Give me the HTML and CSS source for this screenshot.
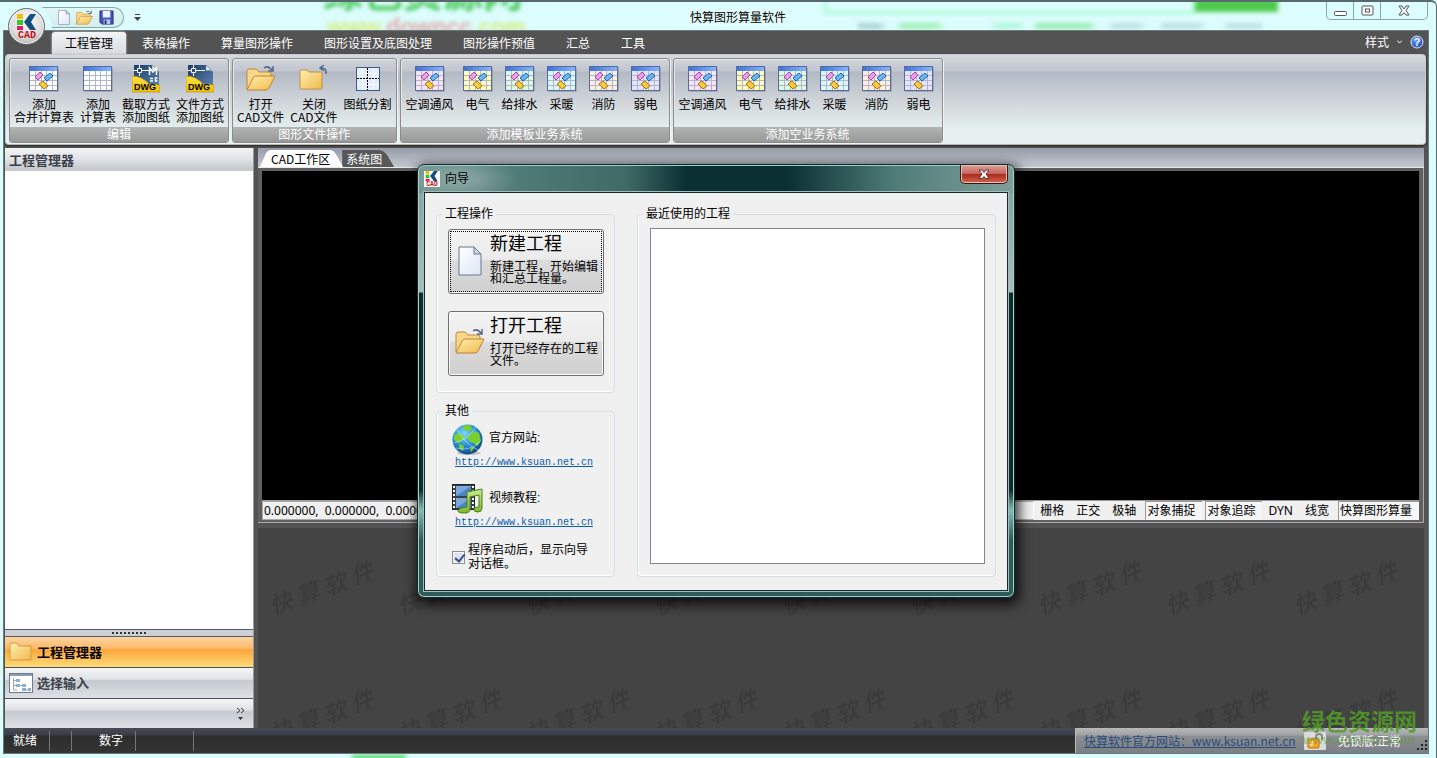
FILE: index.html
```html
<!DOCTYPE html>
<html lang="zh-CN">
<head>
    <meta charset="UTF-8">
    <meta name="viewport" content="width=device-width, initial-scale=1.0">
    <title>快算图形算量软件</title>
    <link rel="stylesheet" href="styles.css">
</head>
<body>
    <!-- shared icons -->
    <svg class="sprite" aria-hidden="true">
        <defs>
            <linearGradient id="g-blue" x1="0" y1="0" x2="1" y2="0"><stop offset="0" stop-color="#3f74d8"/><stop offset="1" stop-color="#86b4fa"/></linearGradient>
            <linearGradient id="g-folder" x1="0" y1="0" x2="1" y2="1"><stop offset="0" stop-color="#ffeeb0"/><stop offset="1" stop-color="#f0ba4c"/></linearGradient>
            <linearGradient id="g-gold" x1="0" y1="0" x2="0" y2="1"><stop offset="0" stop-color="#fbe04c"/><stop offset="1" stop-color="#f0c000"/></linearGradient>
            <linearGradient id="g-page" x1="0" y1="0" x2="1" y2="1"><stop offset="0" stop-color="#ffffff"/><stop offset="1" stop-color="#dce6f6"/></linearGradient>
            <linearGradient id="g-dwg" x1="0" y1="0" x2="1" y2="1"><stop offset="0" stop-color="#1d3c66"/><stop offset="1" stop-color="#5e86b4"/></linearGradient>
            <radialGradient id="g-globe" cx=".4" cy=".3" r=".75"><stop offset="0" stop-color="#7cd8f8"/><stop offset=".6" stop-color="#2188cc"/><stop offset="1" stop-color="#0a3f78"/></radialGradient>
            <radialGradient id="g-help" cx=".4" cy=".3" r=".8"><stop offset="0" stop-color="#6aa2ff"/><stop offset="1" stop-color="#1440b8"/></radialGradient>
            <linearGradient id="g-note" x1="0" y1="0" x2="0" y2="1"><stop offset="0" stop-color="#c8ee88"/><stop offset="1" stop-color="#7ab82c"/></linearGradient>
        </defs>
        <symbol id="i-table" viewBox="0 0 30 26">
            <rect x="1.5" y="1.5" width="28" height="24" fill="#5b6270" opacity=".6"/>
            <rect x=".5" y=".5" width="28" height="24" fill="currentColor" stroke="#5a6b9a"/>
            <rect x="1" y="1" width="27" height="4" fill="url(#g-blue)"/>
            <path d="M1 9.5h27M1 14.5h27M1 19.5h27M6.5 5v19M12.5 5v19M17.5 5v19M23.5 5v19" stroke="#b0b7cc" fill="none"/>
        </symbol>
        <symbol id="i-merge" viewBox="0 0 30 26">
            <use href="#i-table"/>
            <path d="M6 11l5-5 3 3-5 5z" fill="#f49aec" stroke="#a04ba8"/>
            <path d="M15 12l6-5 3 3-6 5z" fill="#68b8f8" stroke="#2060b0"/>
            <path d="M10 18l4-3 5 5-4 3z" fill="#fcca40" stroke="#a87408"/>
        </symbol>
        <symbol id="i-dwg" viewBox="0 0 28 28">
            <path d="M2 0h18l7 7v17H2z" fill="url(#g-dwg)"/>
            <path d="M20 0l7 7q-4-3-7-1z" fill="#eef4fa" stroke="#54719a" stroke-width=".5"/>
            <path d="M0 11q10 0 17 8l11 1v7H0z" fill="url(#g-gold)" stroke="#b88c00" stroke-width=".6"/>
            <path d="M2 5.500h3M10 5.500h9M7.500 0v3M7.500 8v3M5.500 3.500h4v4h-4z" fill="none" stroke="#fff"/>
            <text x="2" y="25" class="dwg-text">DWG</text>
        </symbol>
        <symbol id="i-folder-open" viewBox="0 0 30 28">
            <path d="M1 24V6q0-2 2-2h7l3 3h10q2 0 2 2v3" fill="#f8d888" stroke="#c08838"/>
            <path d="M1 25L7 13q1-2 3-2h19l-6 12q-1 2-3 2z" fill="url(#g-folder)" stroke="#c08030"/>
            <path d="M18 3q4-3 8 2M27 1v5h-5" fill="none" stroke="#56688a" stroke-width="1.500"/>
        </symbol>
        <symbol id="i-folder" viewBox="0 0 30 28">
            <path d="M1 8V6q0-1 1-1h6l2 2h12q1 0 1 1v15q0 1-1 1H2q-1 0-1-1z" fill="url(#g-folder)" stroke="#c89040"/>
            <path d="M27 9q1-6-5-6M25 0l-4 3 4 3" fill="none" stroke="#56688a" stroke-width="1.500"/>
        </symbol>
        <symbol id="i-split" viewBox="0 0 24 24">
            <rect x=".5" y=".5" width="23" height="23" fill="#e4eefa" stroke="#3a5a88"/>
            <path d="M6.500 1v22M17.500 1v22M1 6.500h22M1 17.500h22" stroke="#fff"/>
            <path d="M11.500 1v22M1 11.500h22" stroke="#000" stroke-dasharray="2 1"/>
        </symbol>
        <symbol id="i-page" viewBox="0 0 24 30">
            <path d="M1 1h15l7 7v21H1z" fill="url(#g-page)" stroke="#66788e"/>
            <path d="M16 1v7h7z" fill="#cfdcee" stroke="#66788e"/>
        </symbol>
        <symbol id="i-save" viewBox="0 0 16 16">
            <path d="M1 1h14v14H3l-2-2z" fill="#4256b8" stroke="#242e78"/>
            <path d="M4 1h8v7H4z" fill="#eef2ff"/>
            <path d="M5 10h7v5H5z" fill="#b8c4ec"/><path d="M6 11h2v4H6z" fill="#242e78"/>
        </symbol>
        <symbol id="i-logo" viewBox="0 0 20 25">
            <path d="M0 0h6v5H0z" fill="#eec010"/><path d="M0 6h6v5H0z" fill="#30c82c"/><path d="M0 12h6v4H0z" fill="#e01c68"/>
            <path d="M13 0h6l-5 8 5 8h-6L7 8z" fill="#12507e"/>
            <text x="1" y="24" class="logo-text">CAD</text>
        </symbol>
    </svg>

    <div class="backdrop" aria-hidden="true">
        <b class="ghost-name">绿色资源网</b>
        <b class="ghost-url"><i>www.</i>downcc<i>.com</i></b>
        <span class="ghost-box"></span>
        <span class="ghost-block"></span>
        <span class="ghost-line"></span>
        <span class="ghost-foot"></span>
    </div>

    <header class="titlebar">
        <button class="app-button" aria-label="菜单"><svg width="20" height="25"><use href="#i-logo"/></svg></button>
        <div class="quick">
            <div class="quick-bar">
                <button aria-label="新建"><svg width="12" height="15"><use href="#i-page"/></svg></button>
                <button aria-label="打开"><svg width="17" height="16"><use href="#i-folder-open"/></svg></button>
                <button aria-label="保存"><svg width="15" height="15"><use href="#i-save"/></svg></button>
            </div>
            <button class="quick-more" aria-label="自定义"><svg width="7" height="7"><path d="M1 .5h5" stroke="#444"/><path d="M0 3h7L3.500 7z" fill="#444"/></svg></button>
        </div>
        <h1 class="title">快算图形算量软件</h1>
        <div class="controls">
            <button aria-label="最小化"><svg width="13" height="12"><rect x=".5" y="6.500" width="12" height="4" rx="1" fill="#fff" stroke="#53545e"/></svg></button>
            <button aria-label="还原"><svg width="13" height="12"><rect x="1" y="1" width="11" height="9" rx="1" fill="#fff" stroke="#53545e"/><rect x="4.500" y="4" width="4" height="3" fill="#fff" stroke="#53545e"/></svg></button>
            <button class="close" aria-label="关闭"><svg width="12" height="12"><path d="M1 1h3l2 3 2-3h3L8 5.500l3 4.500H8L6 7.500 4 10H1l3-4.500z" fill="#fff" stroke="#53545e"/></svg></button>
        </div>
    </header>

    <div class="shell">
        <nav class="tabs">
            <button class="tab active">工程管理</button>
            <button class="tab">表格操作</button>
            <button class="tab">算量图形操作</button>
            <button class="tab">图形设置及底图处理</button>
            <button class="tab">图形操作预值</button>
            <button class="tab">汇总</button>
            <button class="tab">工具</button>
            <div class="tab-tools">
                <button class="style-menu">样式 <svg width="5" height="4"><path d="M0 .5l2.500 2.500L5 .5" fill="none" stroke="#fff"/></svg></button>
                <button aria-label="帮助"><svg width="14" height="14"><circle cx="7" cy="7" r="6" fill="url(#g-help)" stroke="#dbe6fb"/><text x="7" y="11" text-anchor="middle" class="help-text">?</text></svg></button>
            </div>
        </nav>

        <div class="ribbon">
            <section class="group">
                <div class="group-body">
                    <button class="tool"><svg width="30" height="26"><use href="#i-merge"/></svg>添加<br>合并计算表</button>
                    <button class="tool"><svg width="30" height="26"><use href="#i-table"/></svg>添加<br>计算表</button>
                    <button class="tool"><svg width="28" height="28"><use href="#i-dwg"/><path d="M17.500 10V3l3.500 4 3.500-4v7M18 13.500h3M18 16h3M25.500 13h-2v3h2" fill="none" stroke="#fff" stroke-width="1.500"/></svg>截取方式<br>添加图纸</button>
                    <button class="tool"><svg width="28" height="28"><use href="#i-dwg"/></svg>文件方式<br>添加图纸</button>
                </div>
                <h2>编辑</h2>
            </section>
            <section class="group">
                <div class="group-body">
                    <button class="tool"><svg width="30" height="28"><use href="#i-folder-open"/></svg>打开<br>CAD文件</button>
                    <button class="tool"><svg width="30" height="28"><use href="#i-folder"/></svg>关闭<br>CAD文件</button>
                    <button class="tool"><svg width="24" height="24"><use href="#i-split"/></svg>图纸分割</button>
                </div>
                <h2>图形文件操作</h2>
            </section>
            <section class="group wide">
                <div class="group-body">
                    <button class="tool air"><svg width="30" height="26"><use href="#i-merge"/></svg>空调通风</button>
                    <button class="tool power"><svg width="30" height="26"><use href="#i-merge"/></svg>电气</button>
                    <button class="tool water"><svg width="30" height="26"><use href="#i-merge"/></svg>给排水</button>
                    <button class="tool heat"><svg width="30" height="26"><use href="#i-merge"/></svg>采暖</button>
                    <button class="tool fire"><svg width="30" height="26"><use href="#i-merge"/></svg>消防</button>
                    <button class="tool weak"><svg width="30" height="26"><use href="#i-merge"/></svg>弱电</button>
                </div>
                <h2>添加模板业务系统</h2>
            </section>
            <section class="group wide">
                <div class="group-body">
                    <button class="tool air"><svg width="30" height="26"><use href="#i-merge"/></svg>空调通风</button>
                    <button class="tool power"><svg width="30" height="26"><use href="#i-merge"/></svg>电气</button>
                    <button class="tool water"><svg width="30" height="26"><use href="#i-merge"/></svg>给排水</button>
                    <button class="tool heat"><svg width="30" height="26"><use href="#i-merge"/></svg>采暖</button>
                    <button class="tool fire"><svg width="30" height="26"><use href="#i-merge"/></svg>消防</button>
                    <button class="tool weak"><svg width="30" height="26"><use href="#i-merge"/></svg>弱电</button>
                </div>
                <h2>添加空业务系统</h2>
            </section>
        </div>

        <main class="main">
            <aside class="sidebar">
                <h2 class="side-title">工程管理器</h2>
                <div class="side-tree"></div>
                <div class="splitter"><span></span></div>
                <button class="side-item selected"><svg width="24" height="22"><path d="M1 4q0-2 2-2h5l2 3h12v14H1z" fill="url(#g-folder)" stroke="#d09848"/></svg>工程管理器</button>
                <button class="side-item"><svg width="24" height="20"><rect x=".5" y=".5" width="23" height="19" fill="#fff" stroke="#6d7b90"/><path d="M1 1h22v2H1z" fill="#8d9bb2"/><path d="M4.500 5v12h4M4.500 7.500h4M4.500 12.500h4M11 12.500h3M16 17h3" stroke="#9aa8bc" fill="none"/><path d="M7 6h4v3H7zM7 11h4v3H7zM13 11h4v3h-4zM13 15h4v3h-4zM19 15h3v3h-3z" fill="#8fb0d4"/></svg>选择输入</button>
                <div class="side-foot"><button aria-label="更多"><svg width="9" height="14"><path d="M1 1l3 2.500L1 6M5 1l3 2.500L5 6" fill="none" stroke="#333"/><path d="M2 10h5l-2.500 3z" fill="#333"/></svg></button></div>
            </aside>

            <div class="work">
                <div class="doc-tabs">
                    <button class="doc-tab current">CAD工作区</button>
                    <button class="doc-tab">系统图</button>
                </div>
                <div class="cad">
                    <div class="canvas"></div>
                    <div class="cad-status">
                        <span class="coords">0.000000,&nbsp; 0.000000,&nbsp; 0.000000</span>
                        <button>栅格</button>
                        <button>正交</button>
                        <button>极轴</button>
                        <button class="pressed">对象捕捉</button>
                        <button class="pressed">对象追踪</button>
                        <button>DYN</button>
                        <button>线宽</button>
                        <button class="pressed">快算图形算量</button>
                    </div>
                </div>
                <div class="lower">
                    <svg width="100%" height="100%" aria-hidden="true">
                        <defs>
                            <pattern id="mark" width="128" height="128" patternUnits="userSpaceOnUse">
                                <text class="mark-text" x="15 42 69 96" y="87 77 68 57" rotate="-20">快算软件</text>
                            </pattern>
                        </defs>
                        <rect width="100%" height="100%" fill="url(#mark)"/>
                    </svg>
                </div>
            </div>
        </main>

        <footer class="status">
            <span class="cell ready">就绪</span>
            <span class="cell blank"></span>
            <span class="cell number">数字</span>
            <span class="cell spare"></span>
            <div class="status-right">
                <a href="#">快算软件官方网站：www.ksuan.net.cn</a>
                <svg width="22" height="18"><rect width="22" height="18" rx="1" fill="#d9dcdc"/><path d="M12 8V5q0-3 3-3t3 3v3" fill="none" stroke="#888" stroke-width="2"/><rect x="4" y="7" width="11" height="9" rx="1" fill="#f6a52c" stroke="#c07010"/><path d="M6 9h3v5H6z" fill="#ffd890"/></svg>
                <span class="licence">免锁版:正常</span>
                <svg class="grip" width="11" height="11"><path d="M8 1h2M4 5h2M8 5h2M0 9h2M4 9h2M8 9h2" stroke="#222" stroke-width="2"/></svg>
            </div>
        </footer>
    </div>

    <div class="site-mark"><b>绿色资源网</b><span>www.downcc.com</span></div>

    <section class="dialog" role="dialog" aria-labelledby="dialog-title">
        <header class="dialog-head">
            <svg width="16" height="16"><rect width="16" height="16" fill="#fff"/><use href="#i-logo" width="16" height="16"/></svg>
            <h2 id="dialog-title">向导</h2>
            <button class="dialog-close" aria-label="关闭"><svg width="12" height="11"><path d="M1 1h3l2 2.500L8 1h3L8 5l3 4.500H8L6 7.500 4 9.500H1L4 5z" fill="#fff" stroke="#5c3a3c"/></svg></button>
        </header>
        <div class="dialog-body">
            <div class="dialog-left">
                <fieldset class="box actions">
                    <legend>工程操作</legend>
                    <button class="action focused">
                        <svg width="24" height="30"><use href="#i-page"/></svg>
                        <span><strong>新建工程</strong>新建工程，开始编辑<br>和汇总工程量。</span>
                    </button>
                    <button class="action">
                        <svg width="30" height="28"><use href="#i-folder-open"/></svg>
                        <span><strong>打开工程</strong>打开已经存在的工程<br>文件。</span>
                    </button>
                </fieldset>
                <fieldset class="box others">
                    <legend>其他</legend>
                    <div class="other">
                        <svg width="32" height="32"><ellipse cx="17" cy="29" rx="12" ry="2" fill="#999" opacity=".5"/><circle cx="15.500" cy="15.500" r="15" fill="url(#g-globe)"/><path d="M11 2q5-2 8 0l1 4-5 1-3-1zM2 11l6-2 5 5-4 3-3 2-4-3zM17 11l6-4 4 2 2 8-4 5-3-3-4-1-3-4zM7 20l5 2-1 5-4-3zM18 24l5-1-4 5z" fill="#78d030"/><path d="M2 19q14-3 22-16M5 6q8 14 21 20M4 24q12 4 24-6" fill="none" stroke="#fff" opacity=".45"/></svg>
                        <span>官方网站:</span>
                    </div>
                    <a href="#">http://www.ksuan.net.cn</a>
                    <div class="other video">
                        <svg width="32" height="32"><rect x=".5" y=".5" width="22" height="25" fill="#3c4048" stroke="#222"/><path d="M4 2h15v10H4zM4 14h15v10H4z" fill="#4c84c4"/><path d="M4 2h15L4 12zM4 14h15L4 24z" fill="#78a8dc"/><path d="M2 2v23M21 2v23" stroke="#fff" stroke-width="2" stroke-dasharray="2 2"/><path d="M15 8l15-3v19q0 4-4 4t-4-2q0-3 5-3V11l-9 2v12q0 4-5 4-7 0-7-2 0-3 9-4z" fill="url(#g-note)" stroke="#4c7c18"/></svg>
                        <span>视频教程:</span>
                    </div>
                    <a href="#">http://www.ksuan.net.cn</a>
                    <label class="startup"><input type="checkbox" checked><span>程序启动后，显示向导<br>对话框。</span></label>
                </fieldset>
            </div>
            <fieldset class="box recent">
                <legend>最近使用的工程</legend>
                <div class="recent-list"></div>
            </fieldset>
        </div>
    </section>
</body>
</html>
```
FILE: styles.css
```css
:root {
    --glass: #dcfdfd;
    --dark: #535353;
    --line: #8c8c8c;
}

* {
    box-sizing: border-box;
    margin: 0;
    padding: 0;
}

body {
    position: relative;
    height: 100vh;
    display: flex;
    flex-direction: column;
    overflow: hidden;
    background: var(--glass);
    border-top: 2px solid #59686c;
    border-right: 1px solid #59686c;
    border-radius: 0 6px 0 0;
    color: #000;
    font: 12px/16px "Noto Sans CJK SC", "Noto Sans", sans-serif;
    text-spacing-trim: space-all;
}

button {
    border: 0;
    background: none;
    color: inherit;
    font: inherit;
    white-space: nowrap;
}

svg {
    display: block;
    flex: none;
}

.sprite {
    position: absolute;
    width: 0;
    height: 0;
}

.dwg-text {
    font: bold 9px "Liberation Sans", sans-serif;
}

.logo-text {
    font: bold 10px "Liberation Mono", monospace;
    fill: #c01010;
}

.help-text {
    font: bold 11px "Liberation Sans", sans-serif;
    fill: #fff;
}

/* blurred page seen through the glass frame */
.backdrop {
    position: absolute;
    inset: 0;
    overflow: hidden;
}

.backdrop > * {
    position: absolute;
    filter: blur(2px);
}

.ghost-name {
    left: 323px;
    top: -36px;
    font-size: 40px;
    line-height: 48px;
    color: #4ccb5e;
}

.ghost-url {
    left: 327px;
    top: 12px;
    font: bold 23px/26px "Liberation Sans", sans-serif;
    color: #e0aaa8;
}

.ghost-url i {
    font-style: normal;
    color: #d8ec82;
}

.ghost-box {
    left: 824px;
    right: 240px;
    top: -10px;
    height: 22px;
    border: 3px solid #a8fbd0;
}

.ghost-block {
    right: 158px;
    top: -8px;
    width: 83px;
    height: 18px;
    background: #4ecb50;
}

.ghost-line {
    left: 858px;
    top: 21px;
    width: 404px;
    height: 6px;
    opacity: .6;
    background: linear-gradient(90deg, #8fb8bc 0 20px, transparent 30px 38px, #7ce88c 44px 78px, transparent 88px 130px, #98f0c0 140px 160px, transparent 168px 174px, #6fe27e 180px 230px, transparent 240px 250px, #a8d0d4 255px 280px, transparent 290px 300px, #a8d0d4 305px 340px, transparent 350px 365px, #a8d0d4 370px);
}

.ghost-foot {
    left: 352px;
    bottom: -4px;
    width: 54px;
    height: 8px;
    background: #6fe08a;
}

.titlebar {
    position: relative;
    display: flex;
    height: 28px;
    margin-right: 8px;
}

.app-button {
    position: absolute;
    left: 8px;
    top: 6px;
    z-index: 2;
    width: 37px;
    height: 37px;
    display: grid;
    place-items: center;
    border: 1px solid #666;
    border-radius: 50%;
    background: radial-gradient(circle at 50% 35%, #fff, #dcdcdc 55%, #a8a8a8 90%);
    box-shadow: inset 0 0 0 1px #f4f4f4;
}

.quick {
    display: flex;
    align-items: flex-start;
    width: 150px;
    padding: 5px 0 0 42px;
}

.quick-bar {
    display: flex;
    align-items: center;
    gap: 6px;
    height: 21px;
    padding: 0 9px 0 16px;
    border: 1px solid #8fa4a6;
    border-left: 0;
    border-radius: 0 11px 11px 0;
    background: linear-gradient(#e2f8f8, #d2eeee);
    clip-path: path("M0 0H83V21H10Q9 8 0 0z");
}

.quick-more {
    padding: 7px 10px;
}

.title {
    flex: 1;
    padding-top: 7px;
    font-size: 12px;
    font-weight: normal;
    text-align: center;
    text-shadow: 0 0 6px #fff;
}

.controls {
    display: flex;
    height: 18px;
    border: 1px solid #8fa3a5;
    border-top: 0;
    border-radius: 0 0 5px 5px;
}

.controls button {
    width: 27px;
    display: grid;
    place-items: center;
    border-right: 1px solid #8fa3a5;
}

.controls .close {
    width: 46px;
    border-right: 0;
}

.shell {
    position: relative;
    flex: 1;
    min-height: 0;
    display: flex;
    flex-direction: column;
    margin: 0 7px 4px 3px;
    border: 1px solid #6a7a7c;
    background: var(--dark);
}

.tabs {
    display: flex;
    align-items: flex-end;
    gap: 1px;
    height: 23px;
    padding-left: 48px;
    color: #fff;
}

.tab {
    height: 22px;
    padding: 0 15px;
}

.tab.active {
    padding: 0 13px;
    border-radius: 3px 3px 0 0;
    background: linear-gradient(#f4f5f7, #d6dae0);
    box-shadow: 0 0 2px #fff;
    color: #000;
}

.tab-tools {
    flex: 1;
    display: flex;
    justify-content: flex-end;
    align-items: center;
    gap: 8px;
    padding: 0 4px 4px 0;
}

.style-menu {
    display: flex;
    align-items: center;
    gap: 8px;
}

.ribbon {
    display: flex;
    gap: 3px;
    margin: 0 2px 3px 1px;
    padding: 3px 3px 1px;
    border: 1px solid #c8ccd0;
    border-bottom-color: #b8b8b4;
    border-radius: 4px;
    background: linear-gradient(#d6dae0, #c0c5ce 16px, #b4bac5 17px, #d3d9dc 50px, #e6f0f0 75px);
    box-shadow: 0 1px 2px #222;
}

.group {
    display: flex;
    flex-direction: column;
    border: 1px solid var(--line);
    border-radius: 3px;
    box-shadow: 1px 1px 0 #f2f4f4, inset 1px 1px 0 #e4e7ea;
    overflow: hidden;
}

.group-body {
    display: flex;
    height: 68px;
    padding: 0 1px;
}

.group.wide .group-body {
    padding: 0 2px;
}

.group h2 {
    height: 15px;
    background: linear-gradient(#b2b4b4, #969998);
    color: #fff;
    font-size: 12px;
    font-weight: normal;
    line-height: 14px;
    text-align: center;
}

.tool {
    display: block;
    min-width: 42px;
    padding: 6px 3px 0;
    line-height: 13px;
    text-align: center;
    align-self: flex-start;
}

.tool svg {
    height: 28px;
    margin: 0 auto 4px;
    color: #fff;
}

.air svg { color: #f8e4f6; }
.power svg { color: #fdfcb8; }
.water svg { color: #dcf8e0; }
.heat svg { color: #d8f8fc; }
.fire svg { color: #fdeee0; }
.weak svg { color: #e4e4fb; }

.main {
    flex: 1;
    min-height: 0;
    display: flex;
    gap: 4px;
    padding: 0 4px 0 1px;
}

.sidebar {
    width: 249px;
    display: flex;
    flex-direction: column;
    border-right: 1px solid #9a9a9a;
    background: #fff;
}

.side-title {
    height: 23px;
    padding-left: 4px;
    background: linear-gradient(#f2f3f5, #dfe2e6 50%, #c6cacf 90%);
    color: #3c4048;
    font-size: 13px;
    line-height: 24px;
}

.side-tree {
    flex: 1;
}

.splitter {
    height: 8px;
    display: grid;
    place-items: center;
    border: solid #555b66;
    border-width: 1px 0;
    background: #cdd1d6;
}

.splitter span {
    width: 35px;
    height: 2px;
    background: repeating-linear-gradient(90deg, #333 0 2px, transparent 2px 4px);
}

.side-item {
    display: flex;
    align-items: center;
    gap: 4px;
    height: 31px;
    padding-left: 4px;
    border-bottom: 1px solid #4c525c;
    background: linear-gradient(#f4f5f6, #dfe2e5 38%, #c5cad0 42%, #dde1e5);
    color: #3c4048;
    font-size: 13px;
    font-weight: bold;
}

.side-item.selected {
    background: linear-gradient(#fcd3a0, #fdba6a 38%, #fca63c 42%, #fedb78);
    color: #000;
}

.side-foot {
    display: flex;
    justify-content: flex-end;
    height: 29px;
    padding: 6px 8px;
    background: linear-gradient(#f4f5f6, #dfe2e5 38%, #c5cad0 42%, #dde1e5);
}

.work {
    flex: 1;
    min-width: 0;
    display: flex;
    flex-direction: column;
}

.doc-tabs {
    display: flex;
    align-items: flex-end;
    height: 20px;
    padding-left: 2px;
    border-bottom: 1px solid #e8e8e8;
    background: linear-gradient(#969ca8, #c3c7cf);
}

.doc-tab {
    height: 17px;
    margin-left: -16px;
    padding: 0 12px 0 18px;
    background: #585858;
    color: #fff;
    line-height: 15px;
    clip-path: path("M14 17V0H51Q57 1 60 7L66 17z");
}

.doc-tab.current {
    z-index: 1;
    margin-left: 0;
    padding: 0 14px 0 11px;
    background: #fff;
    color: #000;
    clip-path: path("M0 17L6 3Q8 0 11 0H70Q74 0 77 6L83 17z");
}

.cad {
    flex: 1;
    display: flex;
    flex-direction: column;
    margin-bottom: 5px;
    padding: 3px 4px 2px 4px;
    border: solid #aaa;
    border-width: 0 1px 1px 0;
    background: #606060;
}

.canvas {
    flex: 1;
    background: #000;
}

.cad-status {
    display: flex;
    height: 20px;
    border-top: 1px solid #999;
    background: #f0f0f0;
    line-height: 18px;
}

.coords {
    flex: 1;
    padding-left: 1px;
    border: 1px solid #aaa;
    border-right-color: #fff;
    font-family: "Noto Sans", sans-serif;
}

.cad-status button {
    padding: 0 6px;
    font-family: "Noto Sans", "Noto Sans CJK SC", sans-serif;
}

.cad-status .pressed {
    margin-left: 3px;
    padding: 0 7px 0 1px;
    border: solid #999;
    border-width: 1px 0 0 1px;
    background: #f6f6f6;
}

.lower {
    height: 200px;
    background: #444;
}

.mark-text {
    font: italic bold 23px "Noto Sans CJK SC", sans-serif;
    fill: #3b3b3b;
}

.status {
    display: flex;
    height: 25px;
    background: linear-gradient(#464b56, #383d48 7px, #2d2d2d 8px, #343434);
    color: #fff;
    line-height: 24px;
}

.cell {
    margin: 3px 0 2px;
    border-right: 1px solid #777;
    line-height: 18px;
}

.ready {
    width: 46px;
    padding-left: 9px;
}

.blank {
    width: 22px;
}

.number {
    width: 64px;
    padding-left: 27px;
}

.spare {
    width: 58px;
}

.status-right {
    display: flex;
    align-items: center;
    gap: 8px;
    margin-left: auto;
    padding: 0 0 0 8px;
    border-left: 1px solid #bbb;
    background: linear-gradient(#b8b8b8, #a0a3a5 7px, #8c8f92 8px, #7a7f84);
}

.status-right a {
    color: #2b4c7c;
}

.licence {
    margin: 0 8px 0 4px;
}

.grip {
    align-self: flex-end;
    margin-bottom: 2px;
}

.site-mark {
    position: absolute;
    right: 20px;
    bottom: 10px;
    width: 114px;
    color: rgba(82, 155, 40, .85);
    text-align: center;
    pointer-events: none;
}

.site-mark b {
    display: block;
    font-size: 23px;
    line-height: 24px;
    white-space: nowrap;
}

.site-mark span {
    display: block;
    font: bold 13px/16px "Liberation Sans", sans-serif;
    opacity: .5;
}

/* wizard dialog */
.dialog {
    position: absolute;
    top: 162px;
    left: 0;
    right: 4px;
    z-index: 5;
    width: 598px;
    margin: 0 auto;
    padding: 0 6px 6px;
    border: 1px solid #0e2a2a;
    border-radius: 7px;
    background:
        radial-gradient(ellipse 60px 24px at 40px 14px, #8faaa6, transparent),
        linear-gradient(90deg, #6f9490, #54807c 12%, #3f6a66 35%, #0a3032 45%, #0a3032 62%, #4f7c78 80%, #7fa09c) top / 100% 28px no-repeat,
        linear-gradient(#7ca19d, #a9bdbb 127px, #0c2c2c 128px, #0c2c2c 325px, #7fbdb9 345px, #2f5c5a 375px);
    box-shadow: inset 0 0 0 1px #a6ccc8, 2px 4px 12px 3px #000b;
    font-family: "Liberation Sans", "Noto Sans CJK SC", sans-serif;
}

.dialog-head {
    display: flex;
    align-items: center;
    gap: 5px;
    height: 27px;
}

.dialog-head h2 {
    flex: 1;
    font-size: 12px;
    font-weight: normal;
}

.dialog-close {
    align-self: flex-start;
    width: 48px;
    height: 19px;
    display: grid;
    place-items: center;
    border: 1px solid #3c1414;
    border-top: 0;
    border-radius: 0 0 5px 5px;
    background: linear-gradient(#dca098, #c8645c 48%, #a82818 50%, #d06850);
    box-shadow: inset 0 0 0 1px #f0c0b8;
}

.dialog-body {
    display: grid;
    grid-template-columns: 179px 1fr;
    gap: 22px;
    padding: 14px 11px 13px;
    border: 1px solid #122c2c;
    outline: 1px solid #a4bcba;
    background: #f0f0f0;
}

.box {
    --inset: 11px;
    min-width: 0;
    border: 1px solid #d5dfe5;
    border-radius: 4px;
    box-shadow: inset 1px -1px 0 #fff;
}

.box legend {
    margin-left: calc(5px - var(--inset));
    padding: 0 3px;
    line-height: 14px;
}

.dialog-left {
    display: flex;
    flex-direction: column;
    gap: 11px;
}

.actions {
    display: flex;
    flex-direction: column;
    gap: 17px;
    padding: 8px 10px 16px var(--inset);
}

.action {
    display: grid;
    grid-template-columns: 41px 1fr;
    align-items: start;
    height: 65px;
    border: 1px solid #707070;
    border-radius: 3px;
    background: linear-gradient(#f3f3f3, #ebebeb 46%, #dcdcdc 48%, #cfcfcf);
    box-shadow: inset 0 0 0 1px #fafafa;
    line-height: 12px;
    text-align: left;
}

.action.focused {
    outline: 1px dotted #000;
    outline-offset: -3px;
}

.action svg {
    margin: 16px auto 0;
}

.action strong {
    display: block;
    margin: 4px 0 7px;
    font-size: 18px;
    font-weight: normal;
    line-height: 20px;
}

.others {
    --inset: 15px;
    padding: 6px 10px 5px var(--inset);
}

.other {
    display: flex;
    gap: 5px;
    line-height: 28px;
}

.others a {
    display: block;
    padding-left: 3px;
    color: #0a5cb0;
    font: 10px/14px "Liberation Mono", monospace;
}

.video {
    margin-top: 14px;
}

.startup {
    display: flex;
    align-items: center;
    gap: 3px;
    margin-top: 13px;
    line-height: 14px;
    white-space: nowrap;
}

.startup input {
    appearance: none;
    flex: none;
    width: 13px;
    height: 13px;
    border: 1px solid #8e8f8f;
    background: #dfe3ea;
    box-shadow: inset 0 0 0 1px #f6f6f6;
}

.startup input:checked::after {
    content: "";
    display: block;
    width: 4px;
    height: 8px;
    margin-left: 4px;
    border: solid #3a4f94;
    border-width: 0 2px 2px 0;
    transform: rotate(40deg);
}

.recent {
    --inset: 12px;
    display: flex;
    flex-direction: column;
    padding: 7px 10px 12px var(--inset);
}

.recent-list {
    flex: 1;
    border: 1px solid #82878f;
    background: #fff;
}
```
